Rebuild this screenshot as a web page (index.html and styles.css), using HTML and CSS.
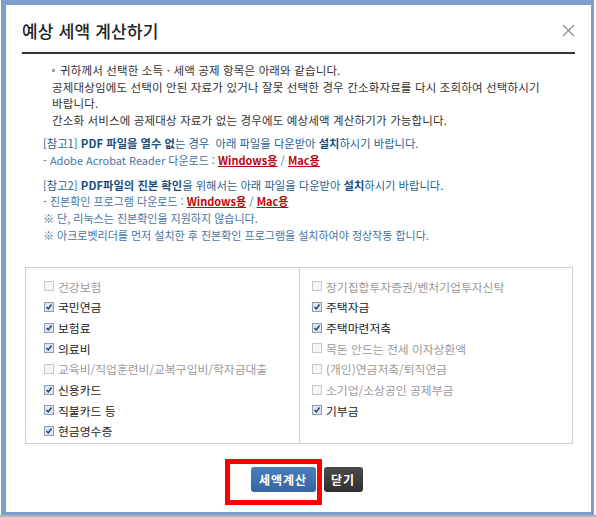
FILE: index.html
```html
<!DOCTYPE html>
<html lang="ko">
<head>
  <meta charset="UTF-8">
  <title>예상 세액 계산하기</title>
  <link rel="stylesheet" href="styles.css">
</head>
<body>
  <div class="frame">
    <div class="dialog-head">
      <h1>예상 세액 계산하기</h1>
      <span class="close">
        <svg width="13" height="13" viewBox="0 0 13 13"><path d="M1 1L12 12M12 1L1 12" stroke="#8a8a8a" stroke-width="1.1" fill="none"/></svg>
      </span>
    </div>

    <div class="notes">
      <p class="lead"><span class="dot"></span>귀하께서 선택한 소득 · 세액 공제 항목은 아래와 같습니다.</p>
      <p>공제대상임에도 선택이 안된 자료가 있거나 잘못 선택한 경우 간소화자료를 다시 조회하여 선택하시기 바랍니다.</p>
      <p>간소화 서비스에 공제대상 자료가 없는 경우에도 예상세액 계산하기가 가능합니다.</p>
    </div>

    <div class="ref">
      <p class="ref-title">[참고1] <b>PDF 파일을 열수 없</b>는 경우 &nbsp;아래 파일을 다운받아 <b>설치</b>하시기 바랍니다.</p>
      <p class="ref-line">- Adobe Acrobat Reader 다운로드 : <a href="#">Windows용</a> / <a href="#">Mac용</a></p>
    </div>

    <div class="ref">
      <p class="ref-title">[참고2] <b>PDF파일의 진본 확인</b>을 위해서는 아래 파일을 다운받아 <b>설치</b>하시기 바랍니다.</p>
      <p class="ref-line">- 진본확인 프로그램 다운로드 : <a href="#">Windows용</a> / <a href="#">Mac용</a></p>
      <p class="ref-line">※ 단, 리눅스는 진본확인을 지원하지 않습니다.</p>
      <p class="ref-line">※ 아크로벳리더를 먼저 설치한 후 진본확인 프로그램을 설치하여야 정상작동 합니다.</p>
    </div>

    <div class="items">
      <ul class="col">
        <li class="off"><span class="box"></span>건강보험</li>
        <li><span class="box on"></span>국민연금</li>
        <li><span class="box on"></span>보험료</li>
        <li><span class="box on"></span>의료비</li>
        <li class="off"><span class="box"></span>교육비/직업훈련비/교복구입비/학자금대출</li>
        <li><span class="box on"></span>신용카드</li>
        <li><span class="box on"></span>직불카드 등</li>
        <li><span class="box on"></span>현금영수증</li>
      </ul>
      <ul class="col col-right">
        <li class="off"><span class="box"></span>장기집합투자증권/벤처기업투자신탁</li>
        <li><span class="box on"></span>주택자금</li>
        <li><span class="box on"></span>주택마련저축</li>
        <li class="off"><span class="box"></span>목돈 안드는 전세 이자상환액</li>
        <li class="off"><span class="box"></span>(개인)연금저축/퇴직연금</li>
        <li class="off"><span class="box"></span>소기업/소상공인 공제부금</li>
        <li><span class="box on"></span>기부금</li>
      </ul>
    </div>

    <div class="buttons">
      <button class="btn btn-blue">세액계산</button>
      <button class="btn btn-dark">닫기</button>
      <span class="mark"></span>
    </div>
  </div>
  <div class="shade"></div>
</body>
</html>
```

FILE: styles.css
```css
body {
  margin: 0;
  background-color: #ffffff;
  font-family: "Noto Sans CJK KR", "Noto Sans", sans-serif;
  color: #333;
}

p {
  margin: 0;
}

.frame {
  box-sizing: border-box;
  width: 593px;
  height: 515px;
  margin-left: 1px;
  border-style: solid;
  border-color: #7d9dcd;
  border-width: 5px 3px 3px 5px;
  background-color: #ffffff;
}

.shade {
  height: 2px;
  background-color: #b5b5b5;
}

.dialog-head {
  display: flex;
  justify-content: space-between;
  align-items: center;
  margin: 0 16px 0 16px;
  height: 47px;
  border-bottom: 2px solid #333;
}

h1 {
  margin: 3px 0 0 0;
  font-size: 17px;
  font-weight: 500;
  color: #222;
  letter-spacing: 0.2px;
}

.close {
  display: flex;
  margin: 4px 0 0 0;
}

.notes {
  margin: 8px 0 0 46px;
  width: 500px;
  font-size: 11.5px;
  line-height: 16.5px;
  letter-spacing: 0.15px;
  word-break: keep-all;
  color: #333;
}

.lead {
  text-indent: 8px;
  position: relative;
}

.dot {
  position: absolute;
  left: 0;
  top: 7px;
  width: 3px;
  height: 3px;
  background-color: #a0a0a0;
}

.ref {
  margin: 7px 0 0 37px;
  font-size: 11.3px;
  line-height: 16.8px;
}

.ref + .ref {
  margin-top: 8px;
}

.ref-title {
  color: #1f5f93;
}

.ref-title b {
  color: #1a4f80;
  font-weight: 700;
}

.ref-line {
  color: #4675a5;
  font-size: 11px;
}

.ref-line a {
  color: #b40a0a;
  font-weight: 700;
  text-decoration: underline;
}

.items {
  display: flex;
  margin: 23px 0 0 19px;
  width: 548px;
  height: 177px;
  box-sizing: border-box;
  border: 1px solid #cfcfcf;
}

.col {
  list-style: none;
  margin: 0;
  padding: 8px 0 0 18px;
  width: 274px;
  box-sizing: border-box;
}

.col-right {
  border-left: 1px solid #cfcfcf;
  padding-left: 12px;
}

.col li {
  display: flex;
  align-items: center;
  height: 20.7px;
  font-size: 11.8px;
  color: #222;
}

.col li.off {
  color: #9a9a9a;
}

.box {
  box-sizing: border-box;
  width: 10px;
  height: 10px;
  margin-right: 4px;
  border: 1px solid #c9c9c9;
  background-color: #f6f6f6;
}

.box.on {
  border-color: #8d9cb3;
  background-color: #dfe6ef;
  background-image: url("data:image/svg+xml;utf8,<svg xmlns='http://www.w3.org/2000/svg' width='8' height='8' viewBox='0 0 8 8'><path d='M1.5 4L3.3 6L6.5 1.5' stroke='%23233f78' stroke-width='1.4' fill='none'/></svg>");
  background-repeat: no-repeat;
  background-position: center;
}

.buttons {
  position: relative;
  display: flex;
  justify-content: center;
  gap: 8px;
  margin: 23px 0 0 0;
  padding-left: 16px;
}

.btn {
  height: 25px;
  border: none;
  border-radius: 3px;
  color: #ffffff;
  font-family: "Noto Sans CJK KR", sans-serif;
  font-size: 12px;
  font-weight: 700;
  letter-spacing: 1px;
  padding: 0;
}

.btn-blue {
  width: 65px;
  background: linear-gradient(#4a7fbc, #3566a3);
}

.btn-dark {
  width: 39px;
  background: linear-gradient(#4a4a4a, #303030);
}

.mark {
  position: absolute;
  left: 219px;
  top: -8px;
  width: 97px;
  height: 46px;
  box-sizing: border-box;
  border: 5px solid #ff0000;
}
```
